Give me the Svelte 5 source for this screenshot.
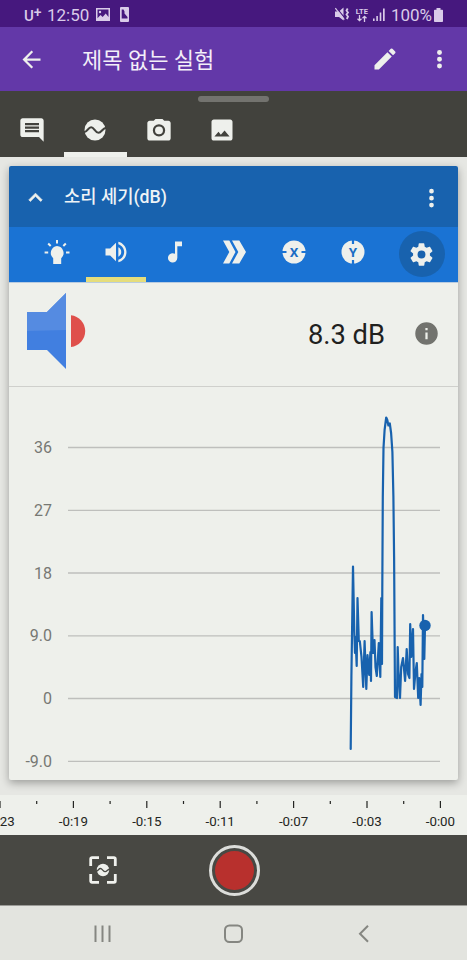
<script>
  const yTicks = [
    { label: '36', y: 60.5 },
    { label: '27', y: 123.3 },
    { label: '18', y: 186 },
    { label: '9.0', y: 248.8 },
    { label: '0', y: 311.5 },
    { label: '-9.0', y: 374.3 },
  ];

  const times = ['-0:23', '-0:19', '-0:15', '-0:11', '-0:07', '-0:03', '-0:00'];

  const tabs = ['note', 'sensor', 'camera', 'gallery'];
  let activeTab = 'sensor';

  const sensors = ['light', 'sound', 'pitch', 'accel', 'x', 'y'];
  let activeSensor = 'sound';

  // sound level samples, in chart coordinates
  const samples = [
    [341.7, 362], [342.4, 290], [344, 179.5], [345.3, 245], [346, 266], [346.5, 250],
    [347.7, 279], [348.5, 211], [349.8, 254], [350.8, 254], [352.5, 270], [354.2, 300],
    [355.6, 254], [356.5, 280], [357.3, 302], [358.5, 268], [360.2, 288], [361.4, 265],
    [362, 294], [362.6, 225], [364, 266], [365.5, 253], [366.5, 280], [367.8, 289],
    [369, 270], [369.8, 256], [371.3, 290], [372.3, 211], [373, 277], [373.3, 200],
    [373.8, 110], [374.5, 61], [375.6, 43], [377.2, 30.5], [378.3, 33], [379.4, 38.5],
    [380.8, 36.5], [382.1, 46], [383.4, 65], [384.4, 110], [385.1, 170], [386, 310],
    [388, 311], [388.7, 260], [389.5, 285], [391, 311], [392.2, 280], [394, 271],
    [396.1, 294], [397.7, 262], [399, 287], [400.4, 291], [401.2, 237], [402.2, 270],
    [404, 242], [405, 302], [406.5, 285], [407.8, 276], [409.2, 311], [410.2, 291],
    [411.6, 318], [412.5, 287], [413.3, 300], [414, 228], [415.3, 272], [416, 239],
  ];

  const line = samples.map((p) => p.join(',')).join(' ');
</script>

<div class="phone">
  <div class="status">
    <span class="carrier">U<sup>+</sup></span>
    <span class="clock">12:50</span>
    <svg class="s-image" width="14" height="13" viewBox="0 0 14 13">
      <path fill-rule="evenodd" d="M0 0h14v13H0zM1.500 1.500v8.700l3-3.200 2.200 2 3-3.500 2.800 3.500V1.500z" />
      <circle cx="4" cy="4" r="1.200" />
    </svg>
    <svg class="s-sim" width="9" height="15" viewBox="0 0 9 15">
      <path fill-rule="evenodd" d="M1 0h7a1 1 0 0 1 1 1v13a1 1 0 0 1-1 1H1a1 1 0 0 1-1-1V1a1 1 0 0 1 1-1zM1.700 2.500v9h5.800V10L4.500 6.500v-2l-1-2z" />
    </svg>
    <span class="grow"></span>
    <svg class="s-mute" width="15" height="15" viewBox="0 0 15 15">
      <path d="M0 4.500h4L8.500.5v13L4 10H0z" />
      <path d="M1.500.8l9 11" fill="none" stroke="#46187e" stroke-width="1.200" />
      <path d="M.3 1.200l9 11.500" fill="none" stroke="#d9cbe9" stroke-width="1.200" />
      <path d="M12.700 1.500l-1.200 2 1.500 2-1.500 2 1.500 2-1.200 2.500" fill="none" stroke="#d9cbe9" stroke-width="1.800" />
    </svg>
    <div class="lte">
      <span>LTE</span>
      <svg width="10" height="7" viewBox="0 0 10 7">
        <path d="M2.500 0v6M.5 3.700l2 2 2-2M7.500 7V1M5.500 3.300l2-2 2 2" fill="none" stroke="#d9cbe9" stroke-width="1.300" />
      </svg>
    </div>
    <svg class="s-signal" width="12" height="13" viewBox="0 0 12 13">
      <path d="M0 10.500h1.600V13H0zM3.300 8h1.600v5H3.300zM6.700 4.500h1.600V13H6.700zM10 .5h1.700V13H10z" />
    </svg>
    <span class="percent">100%</span>
    <svg class="s-battery" width="9" height="14" viewBox="0 0 9 14">
      <path d="M2.500 0h4v1.700H8.200a.8.8 0 0 1 .8.8v10.700a.8.8 0 0 1-.8.8H.8a.8.8 0 0 1-.8-.8V2.500a.8.8 0 0 1 .8-.8h1.700z" />
    </svg>
  </div>

  <header class="appbar">
    <svg class="back" width="27" height="27" viewBox="0 0 24 24"><path d="M20 11H7.830l5.590-5.590L12 4l-8 8 8 8 1.410-1.410L7.830 13H20v-2z" /></svg>
    <h1>제목 없는 실험</h1>
    <svg class="edit" width="28" height="28" viewBox="0 0 24 24"><path d="M3 17.250V21h3.750L17.810 9.940l-3.750-3.750L3 17.250zM20.710 7.040a1 1 0 0 0 0-1.410l-2.340-2.340a1 1 0 0 0-1.410 0l-1.830 1.830 3.750 3.750 1.830-1.830z" /></svg>
    <svg width="27" height="27" viewBox="0 0 24 24"><path d="M12 8a2.200 2.200 0 1 0 0-4.400 2.200 2.200 0 0 0 0 4.400zm0 1.600a2.200 2.200 0 1 0 0 4.400 2.200 2.200 0 0 0 0-4.400zm0 6a2.200 2.200 0 1 0 0 4.400 2.200 2.200 0 0 0 0-4.400z" /></svg>
  </header>

  <div class="tabs">
    <div class="handle"></div>
    <div class="tab-row">
      {#each tabs as tab}
        <button class="tab" class:active={activeTab === tab} aria-label={tab} on:click={() => (activeTab = tab)}>
          <svg width="28" height="28" viewBox="0 0 24 24">
            {#if tab === 'note'}
              <path d="M21.990 4c0-1.100-.89-2-1.990-2H4c-1.100 0-2 .9-2 2v12c0 1.100.9 2 2 2h14l4 4-.01-18zM18 14H6v-2h12v2zm0-3H6V9h12v2zm0-3H6V6h12v2z" />
            {:else if tab === 'sensor'}
              <circle cx="12" cy="12" r="9" />
              <path d="M2.500 14c3-.4 3.600-4.400 6.200-4.400 2.500 0 3.500 4.800 6.300 4.800 2.500 0 3.300-3.700 6.500-4.400" fill="none" stroke="#42423d" stroke-width="1.800" />
            {:else if tab === 'camera'}
              <path fill-rule="evenodd" d="M9 2.500L7.500 4H4c-1.100 0-2 .9-2 2v13c0 1.100.9 2 2 2h16c1.100 0 2-.9 2-2V6c0-1.100-.9-2-2-2h-3.500L15 2.500H9zM12 7a5.300 5.300 0 1 0 0 10.600A5.300 5.300 0 0 0 12 7zm0 1.900a3.400 3.400 0 1 1 0 6.800 3.400 3.400 0 0 1 0-6.800z" />
            {:else}
              <path d="M21 19V5c0-1.100-.9-2-2-2H5c-1.100 0-2 .9-2 2v14c0 1.100.9 2 2 2h14c1.100 0 2-.9 2-2zM9 13.500l2 2.500 3.200-3.500 4.300 5H5.500l3.500-4z" />
            {/if}
          </svg>
        </button>
      {/each}
    </div>
  </div>

  <main>
    <section class="card">
      <div class="card-head">
        <svg width="27" height="27" viewBox="0 0 24 24"><path d="M12 9l-6 6 1.410 1.410L12 11.830l4.590 4.580L18 15z" stroke="#eef0ec" stroke-width=".6" /></svg>
        <h2>소리 세기(dB)</h2>
        <svg width="27" height="27" viewBox="0 0 24 24"><path d="M12 9.400a2.100 2.100 0 1 0 0-4.200 2.100 2.100 0 0 0 0 4.200zm0 2a2.100 2.100 0 1 0 0 4.200 2.100 2.100 0 0 0 0-4.200zm0 6.100a2.100 2.100 0 1 0 0 4.200 2.100 2.100 0 0 0 0-4.200z" /></svg>
      </div>

      <div class="sensors">
        {#each sensors as sensor}
          <button class="sensor" class:active={activeSensor === sensor} aria-label={sensor} on:click={() => (activeSensor = sensor)}>
            <svg width="28" height="28" viewBox="0 0 28 28">
              {#if sensor === 'light'}
                <path d="M14 8a7 7 0 0 1 4.200 12.200v5.700h-8v-5.700A7 7 0 0 1 14 8z" />
                <path d="M14 2v3.400M1.600 14.500H5.200M23 14.500h3.500M5.200 5.500l2.500 2.500M22.800 5.500l-2.500 2.500" stroke="#eef0ec" stroke-width="2" />
              {:else if sensor === 'sound'}
                <path transform="scale(1.167)" d="M3 9v6h4l5 5V4L7 9H3zm13.500 3A4.500 4.500 0 0 0 14 7.970v8.050c1.480-.73 2.500-2.250 2.500-4.020zM14 3.230v2.060c2.890.86 5 3.540 5 6.710s-2.110 5.850-5 6.710v2.060c4.010-.91 7-4.490 7-8.770s-2.990-7.860-7-8.770z" />
              {:else if sensor === 'pitch'}
                <path transform="scale(1.167)" d="M12 3v10.550A4 4 0 1 0 14 17V7h4V3h-6z" />
              {:else if sensor === 'accel'}
                <path d="M2 2.500h6.300L14.500 14 8.300 25.500H2L8.300 14z" />
                <path d="M11 2.500h7.300L25 14l-6.700 11.500H11L17.300 14z" />
              {:else}
                <circle cx="14" cy="14" r="11.500" />
                {#if sensor === 'x'}
                  <path d="M2 14h4.500M21.500 14H26" stroke="#1a73d4" stroke-width="2.200" />
                  <text x="14" y="18.700" text-anchor="middle">X</text>
                {:else}
                  <path d="M14 2v4M14 22v4" stroke="#1a73d4" stroke-width="2.200" />
                  <text x="14" y="18.700" text-anchor="middle">Y</text>
                {/if}
              {/if}
            </svg>
          </button>
        {/each}
        <button class="settings" aria-label="settings">
          <svg width="27" height="27" viewBox="0 0 24 24"><path d="M19.430 12.980c.04-.32.07-.64.07-.98s-.03-.66-.07-.98l2.110-1.650c.19-.15.24-.42.12-.64l-2-3.460c-.12-.22-.39-.3-.61-.22l-2.490 1c-.52-.4-1.080-.73-1.690-.98l-.38-2.650A.49.49 0 0 0 14 2h-4c-.25 0-.46.18-.49.42l-.38 2.650c-.61.25-1.170.59-1.690.98l-2.490-1c-.23-.09-.49 0-.61.22l-2 3.460c-.13.22-.07.49.12.64l2.110 1.650c-.04.32-.07.65-.07.98s.03.66.07.98l-2.110 1.650c-.19.15-.24.42-.12.64l2 3.460c.12.22.39.3.61.22l2.490-1c.52.4 1.080.73 1.690.98l.38 2.650c.03.24.24.42.49.42h4c.25 0 .46-.18.49-.42l.38-2.650c.61-.25 1.170-.59 1.690-.98l2.490 1c.23.09.49 0 .61-.22l2-3.460c.12-.22.07-.49-.12-.64l-2.110-1.650zM12 15.500a3.500 3.500 0 1 1 0-7 3.500 3.500 0 0 1 0 7z" /></svg>
        </button>
      </div>

      <div class="reading">
        <svg class="speaker" width="61" height="78" viewBox="0 0 61 78">
          <path d="M0 20h20L39 1v76L20 58H0z" fill="#417fe0" />
          <path d="M0 20h20L39 1v37L0 39z" fill="#558be1" />
          <path d="M44 23.200a16 16 0 0 1 0 31.800z" fill="#df504b" />
        </svg>
        <span class="value">8.3 dB</span>
        <svg class="info" width="27" height="27" viewBox="0 0 24 24"><path fill="#72736e" d="M12 2a10 10 0 1 0 0 20 10 10 0 0 0 0-20zm1 15h-2v-6h2v6zm0-8h-2V7h2v2z" /></svg>
      </div>

      <svg class="chart" width="449" height="393" viewBox="0 0 449 393">
        {#each yTicks as tick}
          <line x1="59" x2="431" y1={tick.y} y2={tick.y} stroke="#bebfbc" stroke-width="1.300" />
          <text x="43" y={tick.y + 5.500} text-anchor="end">{tick.label}</text>
        {/each}
        <polyline points={line} fill="none" stroke="#1862ae" stroke-width="2.200" stroke-linejoin="round" stroke-linecap="round" />
        <circle cx="416" cy="238.500" r="5.700" fill="#1862ae" />
      </svg>
    </section>
  </main>

  <svg class="timeline" width="467" height="40" viewBox="0 0 467 40">
    {#each times as time, i}
      <rect x={i * 73.4 - 0.6} y="6" width="1.200" height="7" />
      {#if i < 6}
        <rect x={i * 73.4 + 36.1} y="6" width="1.200" height="3" />
      {/if}
      <text x={i * 73.4} y="31.300" text-anchor="middle">{time}</text>
    {/each}
  </svg>

  <div class="controls">
    <svg class="snapshot" width="28" height="28" viewBox="0 0 28 28">
      <path d="M1.700 10V3a1.300 1.300 0 0 1 1.300-1.300h7M18 1.700h7A1.300 1.300 0 0 1 26.300 3v7M26.300 18v7a1.300 1.300 0 0 1-1.300 1.300h-7M10 26.300H3A1.300 1.300 0 0 1 1.700 25v-7" fill="none" stroke="#f0f1ed" stroke-width="2.800" />
      <circle cx="14" cy="14" r="6.200" />
      <path d="M7 15.300c2.300-.2 2.600-2.800 4.400-2.800 2 0 2.700 3.200 4.800 3.200 1.800 0 2.200-2.300 4.800-2.700" fill="none" stroke="#484843" stroke-width="1.300" />
    </svg>
    <button class="record" aria-label="record"><span></span></button>
  </div>

  <nav>
    <svg width="20" height="20" viewBox="0 0 20 20"><path d="M2.500 1.500v16.500M9.500 1.500v16.500M16.500 1.500v16.500" /></svg>
    <svg width="20" height="20" viewBox="0 0 20 20"><rect x="1" y="1.500" width="17" height="16.500" rx="4.500" /></svg>
    <svg width="20" height="20" viewBox="0 0 20 20"><path d="M14 1.800L6 9.700l8 8" /></svg>
  </nav>
</div>

<style>
  :global(body) {
    margin: 0;
  }
  .phone {
    display: flex;
    flex-direction: column;
    width: 467px;
    height: 960px;
    overflow: hidden;
    background: #e6e7e3;
    font-family: Roboto, "Noto Sans CJK KR", sans-serif;
  }
  svg {
    display: block;
    flex: none;
    fill: #eef0ec;
  }
  button {
    border: none;
    background: none;
    padding: 0;
  }
  .status {
    display: flex;
    align-items: center;
    height: 27px;
    box-sizing: border-box;
    padding: 2px 24px 0;
    background: #46187e;
    color: #d9cbe9;
    font-size: 17px;
  }
  .status svg {
    fill: #d9cbe9;
  }
  .carrier {
    width: 23px;
    padding-top: 2px;
    font-size: 15px;
    font-weight: 500;
  }
  .carrier sup {
    font-size: 14px;
    line-height: 0;
    vertical-align: 4px;
  }
  .s-image {
    margin-left: 7px;
  }
  .s-sim {
    margin-left: 10px;
  }
  .grow {
    flex: 1;
  }
  .lte {
    display: flex;
    flex-direction: column;
    align-items: center;
    width: 14px;
    margin: 0 4px 0 5px;
    font-size: 7.5px;
    font-weight: 700;
    line-height: 7px;
  }
  .percent {
    margin: 0 2px 0 6px;
    font-size: 17px;
  }
  .appbar {
    display: flex;
    align-items: center;
    height: 64px;
    padding: 0 14px 0 18px;
    background: #6338a8;
  }
  h1 {
    flex: 1;
    margin: 4px 0 0 37px;
    color: #f3eff8;
    font-size: 22px;
    font-weight: 400;
    line-height: 30px;
  }
  .edit {
    margin-right: 27px;
  }
  .tabs {
    height: 66px;
    box-sizing: border-box;
    padding-top: 5px;
    background: #42423d;
  }
  .handle {
    width: 71px;
    height: 6px;
    margin: 0 auto;
    border-radius: 3px;
    background: #73736f;
  }
  .tab-row {
    display: flex;
  }
  .tab {
    display: flex;
    justify-content: center;
    width: 63.5px;
    height: 55px;
    box-sizing: border-box;
    padding-top: 14px;
    border-bottom: 5px solid transparent;
  }
  .tab.active {
    border-color: #eef0ec;
  }
  main {
    height: 629px;
    padding: 9px 9px 0;
  }
  .card {
    height: 614px;
    border-radius: 2px;
    overflow: hidden;
    background: #eef0eb;
    box-shadow: 0 3px 8px rgba(0, 0, 0, 0.32);
  }
  .card-head {
    display: flex;
    align-items: center;
    height: 61px;
    padding: 0 13px;
    background: #1862ae;
  }
  h2 {
    flex: 1;
    margin: 1px 0 0 15px;
    color: #eef3f6;
    font-size: 17.7px;
    font-weight: 500;
    line-height: 24px;
  }
  .sensors {
    display: flex;
    height: 56px;
    box-sizing: border-box;
    padding-left: 18px;
    border-bottom: 1px solid #b9cce0;
    background: #1a73d4;
  }
  .sensor {
    display: flex;
    justify-content: center;
    width: 59.3px;
    box-sizing: border-box;
    padding-top: 11px;
    border-bottom: 5px solid transparent;
  }
  .sensor.active {
    border-color: #e5dd7c;
  }
  .sensor text {
    fill: #1a6cc4;
    font-family: Roboto, sans-serif;
    font-size: 13.5px;
    font-weight: 700;
  }
  .settings {
    display: flex;
    align-items: center;
    justify-content: center;
    width: 46px;
    height: 46px;
    margin: 4px 0 0 16px;
    border-radius: 50%;
    background: #1862ae;
  }
  .reading {
    display: flex;
    align-items: center;
    height: 104px;
    box-sizing: border-box;
    padding: 0 18px;
    border-bottom: 1px solid #cfd0cc;
  }
  .speaker {
    margin-top: -7px;
  }
  .value {
    flex: 1;
    margin-right: 28px;
    color: #20211e;
    font-size: 27.300px;
    text-align: right;
  }
  .info {
    margin-top: -2px;
  }
  .chart {
    margin-top: 0;
  }
  .chart text {
    fill: #777873;
    font-size: 16px;
  }
  .timeline {
    background: #eef0eb;
    fill: #242522;
    font-size: 13.300px;
  }
  .controls {
    display: grid;
    grid-template-columns: 206px 56px;
    align-items: center;
    justify-items: center;
    height: 70px;
    background: #484843;
  }
  .record {
    display: flex;
    width: 51px;
    height: 51px;
    box-sizing: border-box;
    padding: 3px;
    border: 3px solid #dcddda;
    border-radius: 50%;
  }
  .record span {
    flex: 1;
    border-radius: 50%;
    background: #b8302d;
  }
  nav {
    display: flex;
    justify-content: space-between;
    height: 55px;
    box-sizing: border-box;
    padding: 18px 93px 0;
    border-top: 1px solid #9b9b97;
    background: #e3e4df;
  }
  nav svg {
    fill: none;
    stroke: #858681;
    stroke-width: 2;
  }
</style>
